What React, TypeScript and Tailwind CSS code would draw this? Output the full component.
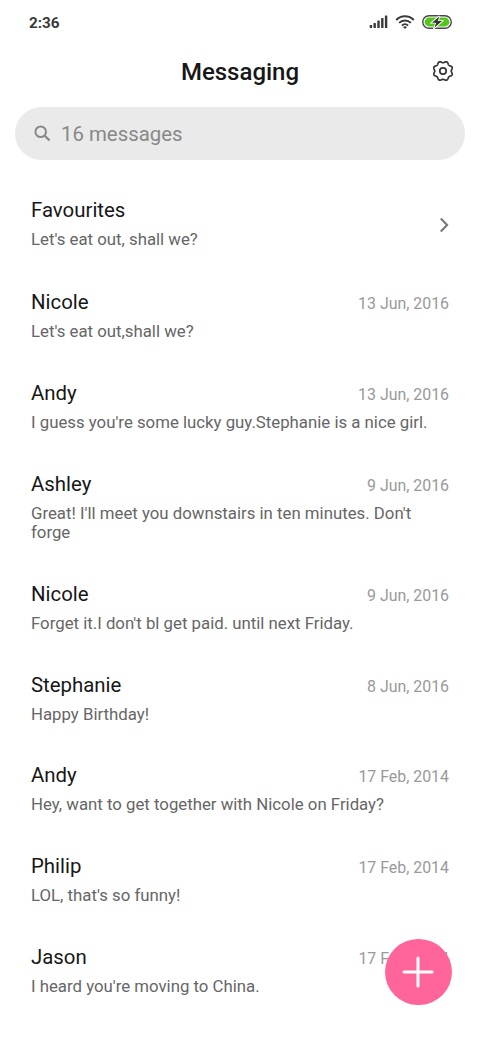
interface Conversation {
  name: string;
  date: string;
  preview: string;
}

const conversations: Conversation[] = [
  { name: 'Nicole', date: '13 Jun, 2016', preview: "Let's eat out,shall we?" },
  { name: 'Andy', date: '13 Jun, 2016', preview: "I guess you're some lucky guy.Stephanie is a nice girl." },
  { name: 'Ashley', date: '9 Jun, 2016', preview: "Great! I'll meet you downstairs in ten minutes. Don't forge" },
  { name: 'Nicole', date: '9 Jun, 2016', preview: "Forget it.I don't bl get paid. until next Friday." },
  { name: 'Stephanie', date: '8 Jun, 2016', preview: 'Happy Birthday!' },
  { name: 'Andy', date: '17 Feb, 2014', preview: 'Hey, want to get together with Nicole on Friday?' },
  { name: 'Philip', date: '17 Feb, 2014', preview: "LOL, that's so funny!" },
  { name: 'Jason', date: '17 Feb, 2014', preview: "I heard you're moving to China." },
];

function SignalIcon() {
  return (
    <svg width="19" height="14" viewBox="0 0 19 14" fill="#3a3a3a">
      <rect x="0.7" y="10" width="2.4" height="3" rx="0.5" />
      <rect x="4.5" y="8" width="2.4" height="5" rx="0.5" />
      <rect x="8.3" y="5.5" width="2.4" height="7.5" rx="0.5" />
      <rect x="12.1" y="3" width="2.4" height="10" rx="0.5" />
      <rect x="15.9" y="0.5" width="2.4" height="12.5" rx="0.5" />
    </svg>
  );
}

function WifiIcon() {
  return (
    <svg width="20" height="14" viewBox="0 0 20 14" fill="none" stroke="#3a3a3a" strokeWidth="2">
      <path d="M1.2 5a12.4 12.4 0 0 1 17.6 0" />
      <path d="M4.1 7.9a8.3 8.3 0 0 1 11.8 0" />
      <path d="M6.9 10.6a4.4 4.4 0 0 1 6.2 0" />
      <path d="M8 11.9Q10 10.4 12 11.9L10 13.9Z" fill="#3a3a3a" stroke="none" />
    </svg>
  );
}

function BatteryIcon() {
  return (
    <svg width="30" height="14" viewBox="0 0 30 14">
      <rect x="0.75" y="0.75" width="28.5" height="12.5" rx="6.25" fill="#fff" stroke="#484848" strokeWidth="1.4" />
      <rect x="2.6" y="2.6" width="24.8" height="8.8" rx="4.4" fill="#55c61b" />
      <path d="M17.6 1.2 10 7.7h4.2l-1.8 5.1 7.6-6.7h-4.3z" fill="#333" stroke="#fff" strokeWidth="1.8" paintOrder="stroke" />
    </svg>
  );
}

// Outline of an eight-lobed cog centred on (12, 12)
function cogPath() {
  const points: string[] = [];
  for (let i = 0; i < 160; i++) {
    const angle = (i / 160) * Math.PI * 2;
    const radius = 9.05 - 0.8 * Math.cos(angle * 8);
    points.push(`${(12 + radius * Math.sin(angle)).toFixed(2)} ${(12 - radius * Math.cos(angle)).toFixed(2)}`);
  }
  return `M${points.join('L')}Z`;
}

function SettingsIcon() {
  return (
    <svg width="24" height="24" viewBox="0 0 24 24" fill="none" stroke="#333" strokeWidth="1.7" strokeLinejoin="round">
      <path d={cogPath()} />
      <circle cx="12" cy="12" r="3.2" />
    </svg>
  );
}

function ConversationRow({ name, date, preview }: Conversation) {
  return (
    <li className="pt-[19px] pb-[19.4px]">
      <div className="flex items-center justify-between">
        <h2 className="text-[20.4px] leading-[26px] text-[#171717]">{name}</h2>
        <time className="pt-[3px] text-[15.9px] leading-[23px] text-[#999]">{date}</time>
      </div>
      <p className="mt-[7px] w-[402px] text-[16.8px] leading-[19.4px] text-[#666]">{preview}</p>
    </li>
  );
}

export default function App() {
  return (
    <div className="relative h-[1040px] w-[480px] overflow-hidden bg-white font-['Roboto',sans-serif]">
      {/* Status bar */}
      <div className="flex h-11 items-center justify-between pr-7 pl-[29px]">
        <span className="pt-0.5 text-[15.3px] font-bold text-[#3a3a3a]">2:36</span>
        <div className="flex items-center gap-[7px]">
          <SignalIcon />
          <WifiIcon />
          <BatteryIcon />
        </div>
      </div>

      {/* Header */}
      <header className="grid h-[55px] grid-cols-[1fr_auto_1fr] items-center px-[25px]">
        <h1 className="col-start-2 text-[24px] font-medium text-[#171717]">Messaging</h1>
        <button className="justify-self-end pb-0.5" aria-label="Settings">
          <SettingsIcon />
        </button>
      </header>

      {/* Search */}
      <div className="mx-[15px] mt-2 flex h-[53px] items-center rounded-full bg-[#eaeaea] pl-[19px] text-[#888]">
        <svg width="17" height="17" viewBox="0 0 17 17" fill="none" stroke="currentColor" strokeWidth="2">
          <circle cx="6.7" cy="6.7" r="5.3" />
          <path d="m10.5 10.5 5 5" strokeWidth="2.3" />
        </svg>
        <span className="ml-[10px] pt-0.5 text-[20.4px]">16 messages</span>
      </div>

      <main className="mt-[18px] px-[31px]">
        <section className="flex h-[92px] items-start justify-between pt-[19px]">
          <div>
            <h2 className="text-[20.4px] leading-[26px] text-[#171717]">Favourites</h2>
            <p className="mt-[7px] text-[16.8px] leading-[19.4px] text-[#666]">Let's eat out, shall we?</p>
          </div>
          <svg className="mt-5" width="10" height="16" viewBox="0 0 10 16" fill="none" stroke="#777" strokeWidth="2.1">
            <path d="m1.8 1.5 6.3 6.5-6.3 6.5" />
          </svg>
        </section>
        <ul>
          {conversations.map((conversation, i) => (
            <ConversationRow key={i} {...conversation} />
          ))}
        </ul>
      </main>

      {/* New message */}
      <button
        className="absolute top-[938.5px] left-[385px] flex size-[66.5px] items-center justify-center rounded-full bg-[#ff659b]"
        aria-label="New message"
      >
        <svg width="32" height="32" viewBox="0 0 32 32" stroke="#fff" strokeWidth="3" strokeLinecap="round">
          <path d="M16 2v28M2 16h28" />
        </svg>
      </button>
    </div>
  );
}
